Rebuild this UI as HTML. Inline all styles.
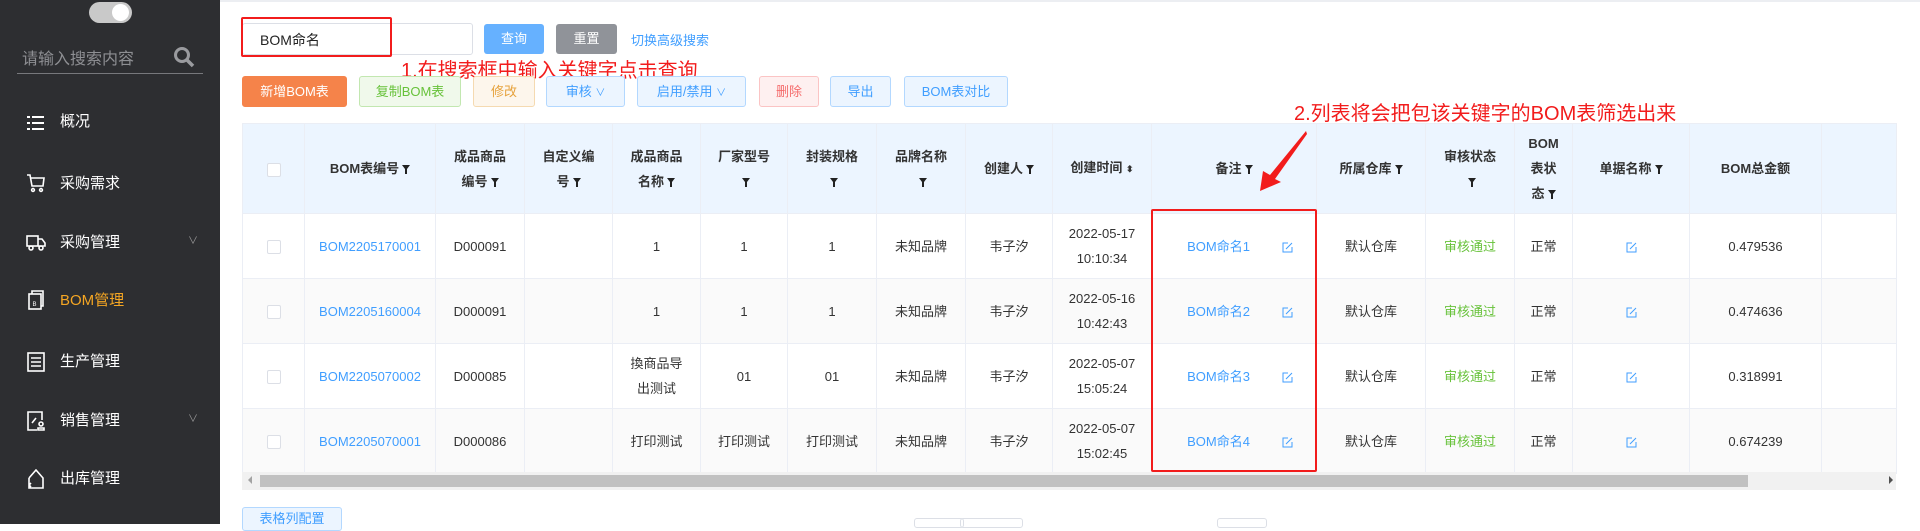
<!DOCTYPE html>
<html><head><meta charset="utf-8"><style>
*{box-sizing:border-box;margin:0;padding:0}
body{width:1920px;height:524px;overflow:hidden;background:#fff;font-family:"Liberation Sans","Noto Sans CJK SC",sans-serif;position:relative;color:#333}
.sb{position:absolute;left:0;top:0;width:220px;height:524px;background:#2d2e31}
.tog{position:absolute;left:89px;top:2px;width:43px;height:21px;border-radius:11px;background:#c9c9c9}
.tog i{position:absolute;right:3px;top:2px;width:17px;height:17px;border-radius:50%;background:#fff}
.st{position:absolute;left:22px;top:45px;color:#8e8f93;font-size:16px}
.ul{position:absolute;left:17px;top:73px;width:186px;height:1px;background:#77787c}
.mi{position:absolute;left:60px;color:#fff;font-size:15px;line-height:20px}
.ic{position:absolute;left:26px;width:20px;height:20px}
.chev{position:absolute;left:188px;color:#999;font-size:10px}
.btn{position:absolute;height:31px;top:76px;border:1px solid;border-radius:3px;font-size:13px;text-align:center;line-height:29px}
.top{position:absolute;top:24px;height:30px;border-radius:3px;color:#fff;font-size:13px;text-align:center;line-height:30px}
table{position:absolute;left:242px;top:123px;border-collapse:collapse;table-layout:fixed;width:1654px}
td,th{border:1px solid #ebeef5;font-size:13px;text-align:center;color:#333;line-height:25px;padding:0 4px}
th{background:#ecf5ff;font-weight:bold;height:90px}
tr.r td{height:65px}
tr.s td{background:#fafafa}
.lk{color:#409eff}.ok{color:#67c23a}
.cb{display:inline-block;width:14px;height:14px;border:1px solid #dcdfe6;border-radius:2px;background:#fff;vertical-align:middle}
.f{display:inline-block;width:8px;height:9px;vertical-align:-1px;margin-left:3px}
.ed{display:inline-block;width:11px;height:11px;vertical-align:middle}
.bz .ed{margin-left:32px}
.bz{padding-left:16px}
</style></head><body>
<div class="sb">
<div class="tog"><i></i></div>
<div class="st">请输入搜索内容</div>
<svg style="position:absolute;left:173px;top:46px" width="22" height="22" viewBox="0 0 22 22"><circle cx="9" cy="9" r="6.5" fill="none" stroke="#9a9b9f" stroke-width="3"/><path d="M14 14l6 6" stroke="#9a9b9f" stroke-width="3.5"/></svg>
<div class="ul"></div>
<svg class="ic" style="top:113px" viewBox="0 0 20 20" fill="#fff"><rect x="1" y="3" width="3" height="2"/><rect x="6" y="3" width="12" height="2"/><rect x="1" y="9" width="3" height="2"/><rect x="6" y="9" width="12" height="2"/><rect x="1" y="15" width="3" height="2"/><rect x="6" y="15" width="12" height="2"/></svg>
<div class="mi" style="top:112px">概况</div>
<svg class="ic" style="top:173px" viewBox="0 0 20 20" fill="none" stroke="#fff" stroke-width="1.6"><path d="M1 2h3l2 11h11l1-8H5"/><circle cx="7" cy="17" r="1.4"/><circle cx="15" cy="17" r="1.4"/></svg>
<div class="mi" style="top:174px">采购需求</div>
<svg class="ic" style="top:232px" viewBox="0 0 20 20" fill="none" stroke="#fff" stroke-width="1.6"><rect x="1" y="4" width="11" height="10"/><path d="M12 7h4l3 4v3h-7"/><circle cx="5" cy="16" r="2"/><circle cx="15" cy="16" r="2"/></svg>
<div class="mi" style="top:233px">采购管理</div><div class="chev" style="top:232px">∨</div>
<svg class="ic" style="top:290px" viewBox="0 0 20 20" fill="none" stroke="#fff" stroke-width="1.6"><rect x="3" y="4" width="12" height="15"/><path d="M6 4V1h11v15h-2"/><text x="6.5" y="16" font-size="6" fill="#fff" stroke="none">B</text></svg>
<div class="mi" style="top:291px;color:#f5a623">BOM管理</div>
<svg class="ic" style="top:352px" viewBox="0 0 20 20" fill="none" stroke="#fff" stroke-width="1.6"><rect x="2" y="1" width="16" height="18"/><path d="M5 6h10M5 10h10M5 14h10"/></svg>
<div class="mi" style="top:352px">生产管理</div>
<svg class="ic" style="top:411px" viewBox="0 0 20 20" fill="none" stroke="#fff" stroke-width="1.6"><path d="M11 19H2V1h14v8"/><path d="M6 12l4-5"/><circle cx="15" cy="13" r="2"/><path d="M12 19v-2h6v2z"/></svg>
<div class="mi" style="top:411px">销售管理</div><div class="chev" style="top:410px">∨</div>
<svg class="ic" style="top:469px" viewBox="0 0 20 20" fill="none" stroke="#fff" stroke-width="1.6"><path d="M3 9L10 1l7 8v10H8"/><path d="M3 9v10h5M3 16l2-2M3 16l2 2"/></svg>
<div class="mi" style="top:469px">出库管理</div>
</div>
<div style="position:absolute;left:220px;top:0;right:0;height:2px;background:#eceef2"></div>
<div style="position:absolute;left:242px;top:23px;width:231px;height:32px;border:1px solid #dcdfe6;border-radius:3px"></div>
<div style="position:absolute;left:241px;top:17px;width:151px;height:40px;border:2px solid #f21c1c;border-radius:2px"></div>
<div style="position:absolute;left:260px;top:30px;font-size:14px;color:#222">BOM命名</div>
<div class="top" style="left:484px;width:60px;background:#66b1ff">查询</div>
<div class="top" style="left:556px;width:61px;background:#909399">重置</div>
<div style="position:absolute;left:631px;top:30px;font-size:13px;color:#409eff">切换高级搜索</div>
<div style="position:absolute;left:401px;top:54px;font-size:20px;color:#f21c1c;white-space:nowrap">1.在搜索框中输入关键字点击查询</div>
<div class="btn" style="left:242px;width:105px;background:#f5834a;border-color:#f5834a;color:#fff">新增BOM表</div>
<div class="btn" style="left:359px;width:102px;background:#f0f9eb;border-color:#c2e7b0;color:#67c23a">复制BOM表</div>
<div class="btn" style="left:473px;width:62px;background:#fdf6ec;border-color:#f5dab1;color:#e6a23c">修改</div>
<div class="btn" style="left:546px;width:79px;background:#ecf5ff;border-color:#b3d8ff;color:#409eff">审核 <span style="font-size:10px">∨</span></div>
<div class="btn" style="left:637px;width:109px;background:#ecf5ff;border-color:#b3d8ff;color:#409eff">启用/禁用 <span style="font-size:10px">∨</span></div>
<div class="btn" style="left:759px;width:60px;background:#fef0f0;border-color:#fbc4c4;color:#f56c6c">删除</div>
<div class="btn" style="left:830px;width:61px;background:#ecf5ff;border-color:#b3d8ff;color:#409eff">导出</div>
<div class="btn" style="left:904px;width:104px;background:#ecf5ff;border-color:#b3d8ff;color:#409eff">BOM表对比</div>
<div style="position:absolute;left:1294px;top:97px;font-size:20px;color:#f21c1c;white-space:nowrap">2.列表将会把包该关键字的BOM表筛选出来</div>
<svg style="position:absolute;left:0;top:0" width="1920" height="524"><defs><symbol id="f" viewBox="0 0 8 9"><path d="M0 0h8L5 4v5H3V4z" fill="#222"/></symbol></defs></svg>
<table>
<colgroup><col style="width:62px"><col style="width:131px"><col style="width:89px"><col style="width:88px"><col style="width:88px"><col style="width:87px"><col style="width:89px"><col style="width:89px"><col style="width:87px"><col style="width:99px"><col style="width:165px"><col style="width:109px"><col style="width:89px"><col style="width:58px"><col style="width:117px"><col style="width:132px"><col style="width:75px"></colgroup>
<tr><th><span class="cb"></span></th><th>BOM表编号<svg class="f"><use href="#f"/></svg></th><th>成品商品<br>编号<svg class="f"><use href="#f"/></svg></th><th>自定义编<br>号<svg class="f"><use href="#f"/></svg></th><th>成品商品<br>名称<svg class="f"><use href="#f"/></svg></th><th>厂家型号<br><svg class="f"><use href="#f"/></svg></th><th>封装规格<br><svg class="f"><use href="#f"/></svg></th><th>品牌名称<br><svg class="f"><use href="#f"/></svg></th><th>创建人<svg class="f"><use href="#f"/></svg></th><th>创建时间 <span style="font-size:9px">⬍</span></th><th>备注<svg class="f"><use href="#f"/></svg></th><th>所属仓库<svg class="f"><use href="#f"/></svg></th><th>审核状态<br><svg class="f"><use href="#f"/></svg></th><th style="padding:0">BOM<br>表状<br>态<svg class="f"><use href="#f"/></svg></th><th>单据名称<svg class="f"><use href="#f"/></svg></th><th>BOM总金额</th><th></th></tr>
<tr class="r"><td><span class="cb"></span></td><td class="lk">BOM2205170001</td><td>D000091</td><td></td><td>1</td><td>1</td><td>1</td><td>未知品牌</td><td>韦子汐</td><td>2022-05-17<br>10:10:34</td><td class="lk bz">BOM命名1<svg class="ed" viewBox="0 0 11 11" fill="none" stroke="#409eff"><path d="M6 1H1v9h9V5M4 7l6-6"/></svg></td><td>默认仓库</td><td class="ok">审核通过</td><td>正常</td><td><svg class="ed" viewBox="0 0 11 11" fill="none" stroke="#409eff"><path d="M6 1H1v9h9V5M4 7l6-6"/></svg></td><td>0.479536</td><td></td></tr>
<tr class="r s"><td><span class="cb"></span></td><td class="lk">BOM2205160004</td><td>D000091</td><td></td><td>1</td><td>1</td><td>1</td><td>未知品牌</td><td>韦子汐</td><td>2022-05-16<br>10:42:43</td><td class="lk bz">BOM命名2<svg class="ed" viewBox="0 0 11 11" fill="none" stroke="#409eff"><path d="M6 1H1v9h9V5M4 7l6-6"/></svg></td><td>默认仓库</td><td class="ok">审核通过</td><td>正常</td><td><svg class="ed" viewBox="0 0 11 11" fill="none" stroke="#409eff"><path d="M6 1H1v9h9V5M4 7l6-6"/></svg></td><td>0.474636</td><td></td></tr>
<tr class="r"><td style="height:64px"><span class="cb"></span></td><td class="lk">BOM2205070002</td><td>D000085</td><td></td><td>換商品导<br>出测试</td><td>01</td><td>01</td><td>未知品牌</td><td>韦子汐</td><td>2022-05-07<br>15:05:24</td><td class="lk bz">BOM命名3<svg class="ed" viewBox="0 0 11 11" fill="none" stroke="#409eff"><path d="M6 1H1v9h9V5M4 7l6-6"/></svg></td><td>默认仓库</td><td class="ok">审核通过</td><td>正常</td><td><svg class="ed" viewBox="0 0 11 11" fill="none" stroke="#409eff"><path d="M6 1H1v9h9V5M4 7l6-6"/></svg></td><td>0.318991</td><td></td></tr>
<tr class="r s"><td><span class="cb"></span></td><td class="lk">BOM2205070001</td><td>D000086</td><td></td><td>打印测试</td><td>打印测试</td><td>打印测试</td><td>未知品牌</td><td>韦子汐</td><td>2022-05-07<br>15:02:45</td><td class="lk bz">BOM命名4<svg class="ed" viewBox="0 0 11 11" fill="none" stroke="#409eff"><path d="M6 1H1v9h9V5M4 7l6-6"/></svg></td><td>默认仓库</td><td class="ok">审核通过</td><td>正常</td><td><svg class="ed" viewBox="0 0 11 11" fill="none" stroke="#409eff"><path d="M6 1H1v9h9V5M4 7l6-6"/></svg></td><td>0.674239</td><td></td></tr>
</table>
<div style="position:absolute;left:242px;top:472px;width:1654px;height:18px;background:#f1f1f1"></div>
<div style="position:absolute;left:260px;top:475px;width:1488px;height:12px;background:#c1c1c1"></div>
<div style="position:absolute;left:248px;top:476px;width:0;height:0;border:4px solid transparent;border-right-color:#a3a3a3;border-left:0"></div>
<div style="position:absolute;left:1889px;top:476px;width:0;height:0;border:4px solid transparent;border-left-color:#505050;border-right:0"></div>
<div style="position:absolute;left:1151px;top:209px;width:166px;height:263px;border:2px solid #f21c1c;border-radius:2px"></div>
<svg style="position:absolute;left:1250px;top:128px" width="64" height="68"><polygon points="56,3 20,47 13,43 10,63 31,54 25,51 57,6" fill="#f21c1c"/></svg>
<div style="position:absolute;left:242px;top:507px;width:100px;height:24px;background:#ecf5ff;border:1px solid #b3d8ff;border-radius:3px;color:#409eff;font-size:13px;text-align:center;line-height:22px">表格列配置</div>
<div style="position:absolute;left:914px;top:518px;width:50px;height:10px;border:1px solid #dcdfe6;border-radius:3px"></div>
<div style="position:absolute;left:960px;top:518px;width:63px;height:10px;border:1px solid #dcdfe6;border-radius:3px"></div>
<div style="position:absolute;left:1217px;top:518px;width:50px;height:10px;border:1px solid #dcdfe6;border-radius:3px"></div>
</body></html>
